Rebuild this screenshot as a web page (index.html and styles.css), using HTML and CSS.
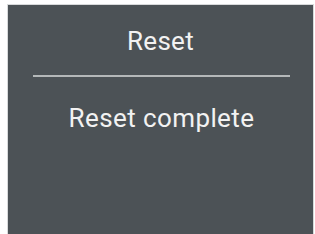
FILE: index.html
```html
<!DOCTYPE html>
<html>
<head>
<meta charset="utf-8">
<link rel="stylesheet" href="styles.css">
</head>
<body>
<div class="panel">
  <div class="title">Reset</div>
  <div class="rule"></div>
  <div class="message">Reset complete</div>
</div>
</body>
</html>
```
FILE: styles.css
```css
html, body {
  margin: 0;
  background: #ffffff;
}
body {
  padding: 5px 2px 0 8px;
  font-family: Roboto, "Liberation Sans", sans-serif;
}
.panel {
  height: 229px;
  background: #4c5256;
  box-shadow: 0 0 0 1px #d8dadb;
  color: #f2f2f2;
  padding-top: 21px;
  box-sizing: border-box;
}
.title {
  text-align: center;
  font-size: 26px;
  line-height: 30px;
  letter-spacing: 0.3px;
}
.rule {
  height: 2px;
  background: #b4b8b9;
  margin: 19px 23px 0 25px;
}
.message {
  text-align: center;
  font-size: 26px;
  line-height: 30px;
  letter-spacing: 0.4px;
  margin-top: 26px;
  padding-left: 2px;
}
```
